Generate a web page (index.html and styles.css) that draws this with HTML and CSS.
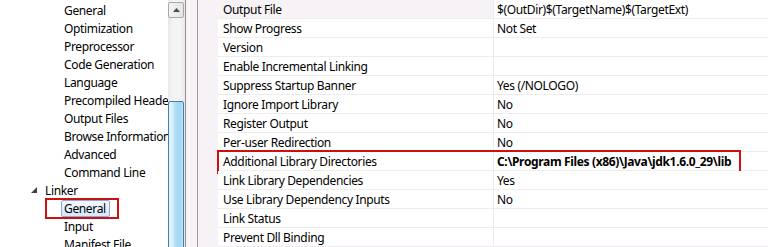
FILE: index.html
```html
<!DOCTYPE html>
<html>
<head>
<meta charset="utf-8">
<link rel="stylesheet" href="styles.css">
</head>
<body>
<div class="app">
  <div class="tree">
    <ul class="items">
      <li class="l2">General</li>
      <li class="l2">Optimization</li>
      <li class="l2">Preprocessor</li>
      <li class="l2">Code Generation</li>
      <li class="l2">Language</li>
      <li class="l2">Precompiled Headers</li>
      <li class="l2">Output Files</li>
      <li class="l2">Browse Information</li>
      <li class="l2">Advanced</li>
      <li class="l2">Command Line</li>
      <li class="l1"><span class="tri"></span>Linker</li>
      <li class="l2 sel"><span class="selbox">General</span><span class="redbox tree-red"></span></li>
      <li class="l2">Input</li>
      <li class="l2">Manifest File</li>
    </ul>
  </div>
  <div class="vscroll">
    <div class="upbtn"><svg width="7" height="4" viewBox="0 0 7 4"><path d="M0 4 L3.5 0 L7 4 Z" fill="#4d4d4d"/></svg></div>
    <div class="thumb"></div>
  </div>
  <div class="splitter"></div>
  <div class="grid">
    <div class="gutter"></div>
    <div class="rows">
      <div class="row first"><div class="name">Output File</div><div class="val">$(OutDir)$(TargetName)$(TargetExt)</div></div>
      <div class="row"><div class="name">Show Progress</div><div class="val">Not Set</div></div>
      <div class="row"><div class="name">Version</div><div class="val"></div></div>
      <div class="row"><div class="name">Enable Incremental Linking</div><div class="val"></div></div>
      <div class="row"><div class="name">Suppress Startup Banner</div><div class="val">Yes (/NOLOGO)</div></div>
      <div class="row"><div class="name">Ignore Import Library</div><div class="val">No</div></div>
      <div class="row"><div class="name">Register Output</div><div class="val">No</div></div>
      <div class="row"><div class="name">Per-user Redirection</div><div class="val">No</div></div>
      <div class="row hl"><div class="name">Additional Library Directories</div><div class="val bold">C:\Program Files (x86)\Java\jdk1.6.0_29\lib</div><span class="redbox grid-red"></span></div>
      <div class="row"><div class="name">Link Library Dependencies</div><div class="val">Yes</div></div>
      <div class="row"><div class="name">Use Library Dependency Inputs</div><div class="val">No</div></div>
      <div class="row"><div class="name">Link Status</div><div class="val"></div></div>
      <div class="row"><div class="name">Prevent Dll Binding</div><div class="val"></div></div>
    </div>
  </div>
</div>
</body>
</html>
```
FILE: styles.css
```css
* { box-sizing: border-box; }
html, body { margin: 0; padding: 0; }
body {
  width: 768px;
  height: 247px;
  overflow: hidden;
  background: #ffffff;
  font-family: "Noto Sans", "Open Sans", sans-serif;
  font-size: 12px;
  letter-spacing: -0.35px;
  color: #000;
}
.app {
  display: flex;
  height: 247px;
}
.tree {
  width: 168px;
  flex: none;
  background: #fff;
  overflow: hidden;
}
.items {
  list-style: none;
  margin: 0;
  padding: 2px 0 0 0;
}
.items li {
  height: 18px;
  line-height: 18px;
  white-space: nowrap;
  position: relative;
}
.l2 { padding-left: 64px; }
.l1 { padding-left: 45px; }
.tri {
  position: absolute;
  left: 31px;
  top: 5px;
  width: 0;
  height: 0;
  border-left: 6px solid transparent;
  border-bottom: 6px solid #404040;
}
.sel { padding-left: 61px; }
.selbox {
  display: inline-block;
  height: 17px;
  line-height: 15px;
  padding: 0 3px 0 2px;
  border: 1px solid #84acdd;
  border-radius: 2px;
  background: linear-gradient(#f2f8ff, #d6e8fc);
  vertical-align: top;
  margin-top: 0;
}
.redbox {
  position: absolute;
  border: 2px solid #cc1010;
  pointer-events: none;
}
.tree-red {
  left: 45px;
  top: -2px;
  width: 74px;
  height: 21px;
}
.vscroll {
  width: 17px;
  flex: none;
  position: relative;
  background: linear-gradient(90deg, #e8e8e8, #f4f4f4 30%, #f4f4f4 70%, #e8e8e8);
}
.upbtn {
  position: absolute;
  left: 0;
  top: 2px;
  width: 16px;
  height: 16px;
  border: 1px solid #a8a8a8;
  border-radius: 2px;
  background: linear-gradient(90deg, #f4f4f4, #e4e4e4);
  display: flex;
  align-items: center;
  justify-content: center;
}
.thumb {
  position: absolute;
  left: 0;
  top: 101px;
  width: 16px;
  height: 160px;
  border: 1px solid #3c7fb1;
  border-radius: 2px;
  background: linear-gradient(90deg, #e3f4fc 0%, #d6eefb 25%, #a9dbf6 50%, #a4d5f1 85%, #c9e6f7 100%);
}
.splitter {
  width: 13px;
  flex: none;
  background: #f6f2f6;
  border-left: 1px solid #8e8f8f;
  border-right: 1px solid #9a9a9a;
}
.grid {
  flex: 1;
  display: flex;
  background: #f6f2f6;
}
.gutter {
  width: 20px;
  flex: none;
}
.rows {
  flex: 1;
  display: flex;
  flex-direction: column;
}
.row {
  display: flex;
  flex: none;
  height: 19px;
  padding-top: 1px;
  line-height: 18px;
  background: #fff;
  border-bottom: 1px solid #efecef;
  position: relative;
  white-space: nowrap;
}
.name {
  width: 276px;
  flex: none;
  margin-top: -1px;
  padding-top: 1px;
  padding-left: 5px;
  border-right: 1px solid #efecef;
  overflow: hidden;
}
.val {
  flex: 1;
  padding-left: 3px;
}
.row.first .name { background: #f6f2f6; }
.bold { font-weight: bold; }
.grid-red {
  left: -1px;
  top: -2px;
  width: 524px;
  height: 24px;
}
```
